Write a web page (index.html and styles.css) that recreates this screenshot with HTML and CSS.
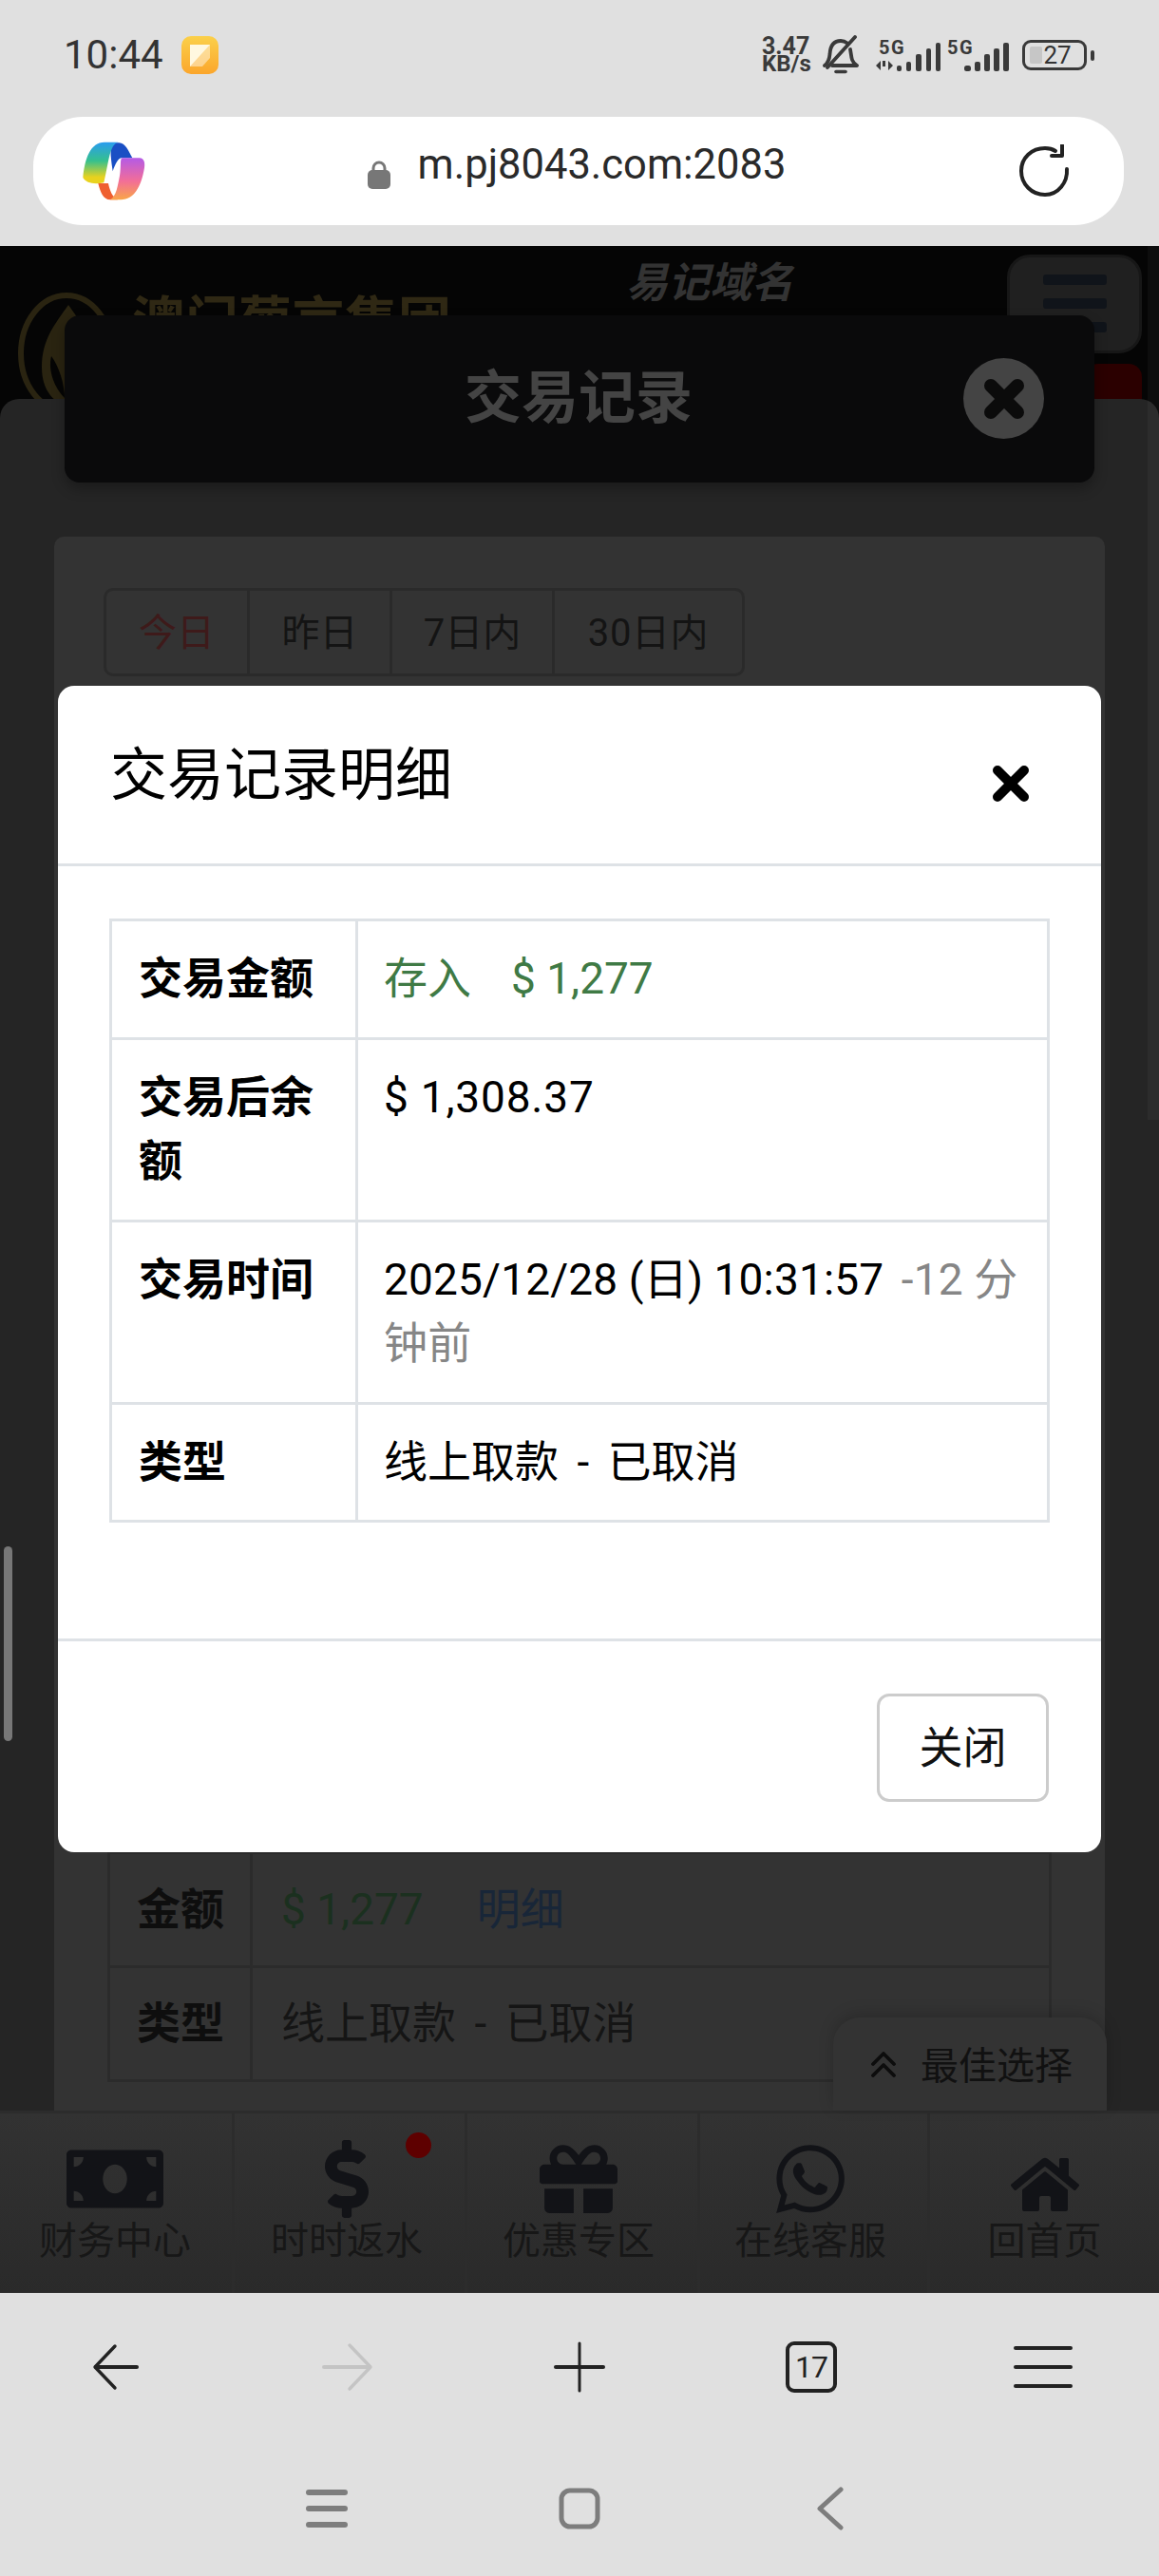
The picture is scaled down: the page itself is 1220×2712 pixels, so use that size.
FILE: index.html
```html
<!DOCTYPE html>
<html lang="zh-CN">
<head>
<meta charset="utf-8">
<title>交易记录明细</title>
<link rel="stylesheet" href="styles.css">
</head>
<body>
<div class="screen">
  <header class="status">
    <div class="status-left">
      <span class="clock">10:44</span>
      <svg class="note" width="39" height="40" viewBox="0 0 39 40"><defs><linearGradient id="ng" x1="0" y1="0" x2="0" y2="1"><stop offset="0" stop-color="#fbd04a"/><stop offset="1" stop-color="#fba62c"/></linearGradient></defs><rect width="39" height="40" rx="10" fill="url(#ng)"/><path d="M9 9h21v14l-8 9H9z" fill="#fff" opacity=".45"/><path d="M9 9h21L9 32z" fill="#fff8e0"/></svg>
    </div>
    <div class="status-right">
      <div class="speed"><span class="speed-num">3.47</span><span class="speed-unit">KB/s</span></div>
      <svg class="bell" width="38" height="42" viewBox="0 0 38 42" fill="none" stroke="#3a3a3a" stroke-width="3.800" stroke-linecap="round" stroke-linejoin="round"><path d="M2 32c4-3 5-6 5.500-12C8 11 12 6 19 6c3 0 5 1 7 2.500M29 15c.5 2 1 8 2 11 .6 2 3 4.500 5 6H10"/><path d="M5 34L34 2"/><path d="M14 38.500h10" stroke-width="3.600"/></svg>
      <svg class="signal" width="142" height="44" viewBox="0 -8 142 44"><text x="4" y="17" class="sig-text">5G</text><g fill="#3a3a3a"><path d="M6 24l-5 5 5 5zM8 24h3v6h-3zM14 34l5-5-5-5zM13 24h-1z"/><rect x="23" y="29" width="5" height="6" rx="2"/><rect x="33" y="25" width="5" height="10" rx="2"/><rect x="43" y="17" width="6" height="18" rx="2"/><rect x="54" y="11" width="5" height="24" rx="2"/><rect x="64" y="5" width="5" height="30" rx="2"/></g><text x="76" y="17" class="sig-text">5G</text><g fill="#3a3a3a"><rect x="94" y="29" width="7" height="6" rx="2.500"/><rect x="105" y="25" width="6" height="10" rx="2"/><rect x="115" y="17" width="6" height="18" rx="2"/><rect x="125" y="11" width="6" height="24" rx="2"/><rect x="135" y="5" width="6" height="30" rx="2"/></g></svg>
      <div class="battery"><span class="battery-body"><span class="battery-fill"></span><span class="battery-num">27</span></span><span class="battery-nub"></span></div>
    </div>
  </header>

  <div class="address">
    <svg class="copilot" width="68" height="62" viewBox="80 56 200 186">
      <defs>
        <linearGradient id="cl" x1="0" y1="0" x2="0" y2="1"><stop offset="0" stop-color="#2a9cf0"/><stop offset=".45" stop-color="#35c08e"/><stop offset=".85" stop-color="#e9d21e"/></linearGradient>
        <linearGradient id="cr" x1="0" y1="0" x2="0" y2="1"><stop offset="0" stop-color="#b45ae6"/><stop offset=".55" stop-color="#f26e98"/><stop offset="1" stop-color="#f9a648"/></linearGradient>
      </defs>
      <path d="M176 60h20c20 0 30 26 42 48h-34c-10 0-20 18-28 42-4-30-12-70 0-90z" fill="#1a4fc4"/>
      <path d="M82 170C88 110 105 58 150 58h44c-28 6-30 60-46 128-30 6-56 2-66-16z" fill="url(#cl)"/>
      <path d="M130 188h32c5 24 12 42 30 52h-24c-22 0-32-26-38-52z" fill="#ef5f30"/>
      <path d="M206 108h54c16 0 20 16 14 42-10 48-30 90-72 90h-34c20-12 24-46 30-76 5-26 0-56 8-56z" fill="url(#cr)"/>
    </svg>
    <div class="url">
      <svg width="24" height="30" viewBox="0 0 24 30"><path d="M6 12V8a6 6 0 0 1 12 0v4" fill="none" stroke="#777" stroke-width="3"/><rect y="10" width="24" height="20" rx="5" fill="#777"/></svg>
      <span class="url-text">m.pj8043.com:2083</span>
    </div>
    <svg class="reload" width="56" height="56" viewBox="0 0 56 56" fill="none" stroke="#222" stroke-width="4" stroke-linecap="round" stroke-linejoin="round"><path d="M51 26c1 14-9 27-23 27S3 42 3 28 14 4 28 4c4 0 8 1 11 3"/><path d="M43 1v11H32" transform="translate(3 0)"/></svg>
  </div>

  <main class="page">
    <div class="site-head">
      <div class="brand">
        <svg class="brand-logo" width="104" height="130" viewBox="0 0 104 130"><ellipse cx="52" cy="65" rx="48" ry="61" fill="none" stroke="#2a2411" stroke-width="6"/><path d="M54 14c14 20 30 40 30 66 0 26-16 38-30 41-14-3-28-16-28-41C26 50 40 34 54 14z" fill="#2a2411"/><path d="M36 68c8 10 14 30 14 44-10-10-18-28-14-44z" fill="#050505"/></svg>
        <span class="brand-name">澳门葡京集团</span>
      </div>
      <span class="domain">易记域名</span>
      <div class="head-right">
        <div class="menu-btn"><i></i><i></i><i></i></div>
        <div class="red-btn"></div>
      </div>
    </div>

    <section class="panel">
      <div class="card">
        <div class="tabs">
          <span class="tab tab-active">今日</span>
          <span class="tab">昨日</span>
          <span class="tab">7日内</span>
          <span class="tab">30日内</span>
        </div>
        <table class="rec">
          <tr><th>金额</th><td><span class="rec-money">$ 1,277</span><span class="rec-link">明细</span></td></tr>
          <tr><th>类型</th><td class="spaced">线上取款 - 已取消</td></tr>
        </table>
      </div>
    </section>

    <nav class="nav">
      <a class="nav-item">
        <span class="nav-icon"><svg width="102" height="82" viewBox="0 0 640 512"><path d="M608 64H32C14.33 64 0 78.33 0 96v320c0 17.67 14.33 32 32 32h576c17.67 0 32-14.33 32-32V96c0-17.67-14.33-32-32-32zM48 400v-64c35.35 0 64 28.65 64 64H48zm0-224v-64h64c0 35.35-28.65 64-64 64zm272 176c-44.19 0-80-42.99-80-96 0-53.02 35.82-96 80-96s80 42.98 80 96c0 53.03-35.83 96-80 96zm272 48h-64c0-35.35 28.65-64 64-64v64zm0-224c-35.35 0-64-28.65-64-64h64v64z"/></svg></span>
        <span>财务中心</span>
      </a>
      <a class="nav-item">
        <span class="nav-icon"><svg width="46" height="82" viewBox="0 0 288 512"><path d="M209.2 233.4l-108-31.6C88.7 198.2 80 186.5 80 173.5c0-16.3 13.2-29.5 29.5-29.5h66.3c12.2 0 24.2 3.700 34.2 10.500 6.100 4.100 14.300 3.100 19.500-2l34.800-34c7.100-6.900 6.100-18.400-1.800-24.500C238 74.800 207.400 64.100 176 64V16c0-8.800-7.200-16-16-16h-32c-8.800 0-16 7.200-16 16v48h-2.500C45.800 64-5.400 118.700.5 183.600c4.200 46.100 39.400 83.600 83.800 96.600l102.500 30c12.500 3.700 21.200 15.300 21.200 28.300 0 16.300-13.200 29.500-29.500 29.500h-66.300C100 368 88 364.300 78 357.500c-6.100-4.100-14.300-3.100-19.500 2l-34.800 34c-7.100 6.900-6.100 18.400 1.800 24.500 24.500 19.200 55.100 29.900 86.500 30v48c0 8.800 7.200 16 16 16h32c8.800 0 16-7.200 16-16v-48.200c46.600-.9 90.300-28.600 105.700-72.700 21.500-61.600-14.600-124.800-72.500-141.700z"/></svg></span>
        <span>时时返水</span>
        <span class="nav-dot"></span>
      </a>
      <a class="nav-item">
        <span class="nav-icon"><svg width="82" height="82" viewBox="0 0 512 512"><path d="M32 448c0 17.700 14.300 32 32 32h160V320H32v128zm256 32h160c17.700 0 32-14.300 32-32V320H288v160zm192-320h-42.100c6.200-12.100 10.100-25.500 10.100-40 0-48.500-39.500-88-88-88-41.600 0-68.500 21.300-103 68.300-34.500-47-61.400-68.300-103-68.300-48.500 0-88 39.500-88 88 0 14.500 3.800 27.900 10.100 40H32c-17.700 0-32 14.300-32 32v80c0 8.800 7.200 16 16 16h480c8.800 0 16-7.200 16-16v-80c0-17.700-14.300-32-32-32zm-326.100 0c-22.100 0-40-17.900-40-40s17.900-40 40-40c19.900 0 34.600 3.300 86.100 80h-86.100zm206.100 0h-86.100c51.400-76.500 65.700-80 86.100-80 22.100 0 40 17.900 40 40s-17.900 40-40 40z"/></svg></span>
        <span>优惠专区</span>
      </a>
      <a class="nav-item">
        <span class="nav-icon"><svg width="72" height="82" viewBox="0 0 448 512"><path d="M380.900 97.100C339 55.100 283.200 32 223.900 32c-122.400 0-222 99.600-222 222 0 39.100 10.200 77.300 29.600 111L0 480l117.700-30.900c32.400 17.700 68.900 27 106.100 27h.1c122.300 0 224.100-99.600 224.100-222 0-59.300-25.200-115-67.100-157zm-157 341.600c-33.200 0-65.700-8.900-94-25.700l-6.700-4-69.800 18.300L72 359.200l-4.400-7c-18.500-29.400-28.200-63.300-28.200-98.200 0-101.700 82.800-184.500 184.600-184.500 49.300 0 95.600 19.200 130.400 54.100 34.800 34.900 56.200 81.200 56.100 130.500 0 101.800-84.900 184.600-186.600 184.600zm101.200-138.200c-5.500-2.800-32.800-16.200-37.900-18-5.100-1.900-8.800-2.800-12.500 2.800-3.700 5.600-14.300 18-17.600 21.800-3.200 3.700-6.500 4.200-12 1.400-32.600-16.300-54-29.100-75.500-66-5.700-9.800 5.700-9.100 16.300-30.300 1.800-3.700.9-6.900-.5-9.700-1.400-2.800-12.500-30.100-17.100-41.200-4.500-10.800-9.100-9.300-12.500-9.500-3.200-.2-6.900-.2-10.600-.2-3.700 0-9.700 1.400-14.800 6.900-5.100 5.600-19.400 19-19.400 46.300 0 27.300 19.900 53.700 22.600 57.400 2.800 3.700 39.100 59.700 94.800 83.800 35.200 15.200 49 16.500 66.600 13.900 10.700-1.600 32.800-13.400 37.400-26.400 4.600-13 4.600-24.100 3.200-26.400-1.300-2.500-5-3.900-10.500-6.600z"/></svg></span>
        <span>在线客服</span>
      </a>
      <a class="nav-item">
        <span class="nav-icon"><svg class="icon-home" width="72" height="64" viewBox="0 0 576 512"><path d="M280.370 148.260L96 300.110V464a16 16 0 0 0 16 16l112.060-.29a16 16 0 0 0 15.920-16V368a16 16 0 0 1 16-16h64a16 16 0 0 1 16 16v95.640a16 16 0 0 0 16 16.050L464 480a16 16 0 0 0 16-16V300L295.670 148.260a12.190 12.190 0 0 0-15.300 0zM571.600 251.470L488 182.560V44.050a12 12 0 0 0-12-12h-56a12 12 0 0 0-12 12v72.610L318.470 43a48 48 0 0 0-61 0L4.340 251.470a12 12 0 0 0-1.600 16.900l25.500 31A12 12 0 0 0 45.150 301l235.220-193.740a12.190 12.190 0 0 1 15.300 0L530.900 301a12 12 0 0 0 16.900-1.600l25.500-31a12 12 0 0 0-1.700-16.930z"/></svg></span>
        <span>回首页</span>
      </a>
    </nav>

    <div class="best">
      <svg width="32" height="27" viewBox="0 0 32 27" fill="none" stroke="#0d0d0d" stroke-width="3.800" stroke-linecap="round" stroke-linejoin="round"><path d="M5 13L16 2l11 11M5 25l11-11 11 11"/></svg>
      <span>最佳选择</span>
    </div>

    <div class="page-title">
      <h1 class="page-title-text">交易记录</h1>
      <span class="title-close"><svg width="46" height="46" viewBox="0 0 46 46"><path d="M9 9L37 37M37 9L9 37" stroke="#0b0b0b" stroke-width="14" stroke-linecap="round"/></svg></span>
    </div>

    <div class="scroll-left"></div>
    <div class="scroll-right"></div>

    <div class="modal">
      <div class="modal-head">
        <h2 class="modal-title">交易记录明细</h2>
        <svg class="modal-x" width="40" height="40" viewBox="0 0 40 40"><path d="M6 6L34 34M34 6L6 34" stroke="#000" stroke-width="10" stroke-linecap="round"/></svg>
      </div>
      <div class="modal-body">
        <table class="detail">
          <tr><th>交易金额</th><td class="money"><span class="money-kind">存入</span>$ 1,277</td></tr>
          <tr><th>交易后余额</th><td class="wide">$ 1,308.37</td></tr>
          <tr><th>交易时间</th><td class="time">2025/12/28 (日) 10:31:57 <span class="muted ago">-12 分</span><span class="muted">钟前</span></td></tr>
          <tr><th>类型</th><td class="spaced">线上取款 - 已取消</td></tr>
        </table>
      </div>
      <div class="modal-foot">
        <button class="close-btn" type="button">关闭</button>
      </div>
    </div>
  </main>

  <footer class="system">
    <div class="toolbar">
      <svg width="50" height="50" viewBox="0 0 50 50" fill="none" stroke="#222" stroke-linecap="round" stroke-linejoin="round"><path d="M24 3L3 25l21 22" stroke-width="3.400"/><path d="M4 25h43" stroke-width="4"/></svg>
      <svg width="56" height="52" viewBox="0 0 56 52" fill="none" stroke="#c4c4c4" stroke-linecap="round" stroke-linejoin="round"><path d="M30 3l22 23-22 23" stroke-width="3.400"/><path d="M3 26h48" stroke-width="4"/></svg>
      <svg width="54" height="54" viewBox="0 0 54 54" fill="none" stroke="#222" stroke-linecap="round"><path d="M27 2v50" stroke-width="3"/><path d="M2 27h50" stroke-width="4"/></svg>
      <span class="tab-count">17</span>
      <svg width="62" height="46" viewBox="0 0 62 46" fill="none" stroke="#222" stroke-width="4" stroke-linecap="round"><path d="M2 3h58M2 23h58M2 43h58"/></svg>
    </div>
    <div class="sysbar">
      <svg width="44" height="44" viewBox="0 0 44 44" fill="none" stroke="#7d7d7d" stroke-width="6" stroke-linecap="round"><path d="M3 5h38M3 22h38M3 39h38"/></svg>
      <svg width="44" height="44" viewBox="0 0 44 44" fill="none" stroke="#7d7d7d" stroke-width="5"><rect x="3" y="3" width="38" height="38" rx="9"/></svg>
      <svg class="sys-back" width="30" height="46" viewBox="0 0 30 46" fill="none" stroke="#7d7d7d" stroke-width="5" stroke-linecap="round" stroke-linejoin="round"><path d="M26 3L4 23l22 20"/></svg>
    </div>
  </footer>
</div>
</body>
</html>
```

FILE: styles.css
```css
* { box-sizing: border-box; }
html, body { margin: 0; padding: 0; }
body {
  width: 1220px;
  height: 2712px;
  overflow: hidden;
  font-family: Roboto, "Noto Sans CJK SC", sans-serif;
  color: #000;
  background: #e0e0e0;
}
.screen { display: flex; flex-direction: column; width: 1220px; height: 2712px; }

/* status bar */
.status {
  height: 123px;
  padding: 36px 68px 0 67px;
  display: flex;
  justify-content: space-between;
  align-items: flex-start;
}
.status-left { display: flex; align-items: center; gap: 19px; height: 44px; }
.clock { font-size: 42px; color: #333; line-height: 44px; }
.status-right { display: flex; align-items: center; height: 44px; }
.speed { display: flex; flex-direction: column; width: 64px; color: #3a3a3a; font-weight: 700; }
.speed-num { font-size: 25px; line-height: 18px; }
.speed-unit { font-size: 24px; line-height: 18px; }
.bell { margin-right: 17px; }
.signal { margin-right: 13px; margin-top: -8px; }
.sig-text { font: 700 20px Roboto, sans-serif; letter-spacing: 1.500px; fill: #3a3a3a; }
.battery { display: flex; align-items: center; gap: 4px; }
.battery-body {
  position: relative;
  width: 68px;
  height: 32px;
  border: 3px solid #3a3a3a;
  border-radius: 9px;
  display: flex;
  align-items: center;
  justify-content: center;
}
.battery-fill { position: absolute; left: 5px; top: 4px; bottom: 4px; width: 13px; background: #c6c6c6; border-radius: 2px; }
.battery-num { position: relative; font-size: 26px; color: #333; line-height: 1; padding-left: 6px; }
.battery-nub { width: 4px; height: 11px; background: #3a3a3a; border-radius: 2px; }

/* address bar */
.address {
  height: 114px;
  margin: 0 37px 0 35px;
  padding: 0 55px 0 51px;
  background: #fff;
  border-radius: 52px;
  display: flex;
  align-items: center;
  justify-content: space-between;
}
.url { display: flex; align-items: center; gap: 29px; margin-left: -12px; }
.url svg { margin-top: 8px; }
.url-text { font-size: 43.500px; color: #2a2a2a; line-height: 50px; margin-top: -12px; }
.copilot { display: block; }

/* underlying page */
.page {
  position: relative;
  margin-top: 22px;
  flex: 1;
  background: #050505;
  overflow: hidden;
  display: flex;
  flex-direction: column;
}
.site-head { height: 161px; display: flex; align-items: flex-start; padding-left: 18px; }
.brand { display: flex; align-items: flex-start; gap: 17px; margin-top: 48px; }
.brand-logo { flex: none; }
.brand-name { font-size: 56px; font-weight: 700; color: #2f2814; line-height: 1; margin-top: 4px; }
.domain {
  margin-left: 184px;
  margin-top: 13px;
  font-size: 44px;
  line-height: 1.2;
  font-weight: 700;
  font-style: italic;
  color: #333;
}
.head-right { margin-left: auto; margin-right: 18px; margin-top: 9px; display: flex; flex-direction: column; align-items: flex-end; gap: 11px; }
.menu-btn {
  width: 142px;
  height: 104px;
  padding: 18px 0 0;
  background: #202020;
  border: 3px solid #171717;
  border-radius: 24px;
  display: flex;
  flex-direction: column;
  align-items: center;
  gap: 14px;
}
.menu-btn i { display: block; width: 67px; height: 11px; border-radius: 3px; background: #10141a; }
.red-btn { width: 60px; height: 40px; background: #2b0000; border-radius: 14px 14px 0 0; }

.panel {
  flex: 1;
  min-height: 0;
  padding: 145px 57px 0;
  background: #252525;
  border-radius: 20px 20px 0 0;
  display: flex;
}
.card {
  flex: 1;
  padding: 54px 56px 30px 52px;
  background: #333;
  border-radius: 10px 10px 0 0;
  display: flex;
  flex-direction: column;
}
.tabs {
  align-self: flex-start;
  display: flex;
  width: 675px;
  height: 93px;
  border: 3px solid #2a2a2a;
  border-radius: 10px;
  font-size: 40px;
  color: #141414;
}
.tab { display: flex; align-items: center; justify-content: center; padding-bottom: 5px; border-left: 3px solid #2a2a2a; white-space: nowrap; }
.tab:nth-child(1) { width: 148px; border-left: 0; }
.tab:nth-child(2) { width: 150px; }
.tab:nth-child(3) { width: 171px; }
.tab:nth-child(4) { flex: 1; letter-spacing: .6px; }
.tab-active { color: #3e1a1a; }

.rec {
  margin-top: auto;
  margin-left: 4px;
  width: 994px;
  table-layout: fixed;
  border-collapse: collapse;
  font-size: 46px;
  color: #151515;
}
.rec th, .rec td { height: 120px; border: 3px solid #2b2b2b; padding: 0 30px; vertical-align: middle; text-align: left; line-height: 1.5; }
.rec th { width: 150px; padding-left: 28px; padding-right: 0; font-weight: 700; color: #0e0e0e; white-space: nowrap; }
.rec-money { color: #1b301f; margin-right: 56px; }
.rec-link { color: #182638; }
.spaced { word-spacing: 8px; }

.nav {
  height: 192px;
  flex: none;
  display: grid;
  grid-template-columns: 247px 245px 245px 242px 241px;
  background: linear-gradient(#323232, #2a2a2a);
  border-top: 3px solid #2c2c2c;
}
.nav-item {
  position: relative;
  padding-top: 28px;
  display: flex;
  flex-direction: column;
  align-items: center;
  font-size: 40px;
  line-height: 50px;
  color: #171717;
  border-right: 3px solid #2c2c2c;
}
.nav-item:nth-child(1) { padding-right: 2px; }
.nav-item:nth-child(2) { padding-right: 6px; }
.nav-item:nth-child(3) { padding-right: 8px; }
.nav-item:nth-child(4) { padding-right: 7px; }
.nav-item:last-child { border-right: 0; }
.nav-icon { display: flex; align-items: flex-start; justify-content: center; height: 82px; fill: #121317; }
.icon-home { margin-top: 15px; }
.nav-dot { position: absolute; left: 180px; top: 20px; width: 27px; height: 27px; border-radius: 50%; background: #5e0000; }

.best {
  position: absolute;
  right: 55px;
  bottom: 192px;
  width: 288px;
  height: 98px;
  padding-left: 37px;
  background: #333;
  border-radius: 28px 28px 0 0;
  box-shadow: 0 -4px 16px rgba(0,0,0,.18);
  display: flex;
  align-items: center;
  gap: 23px;
  font-size: 40px;
  color: #111;
}
.best span { margin-top: -2px; }

.page-title {
  position: absolute;
  left: 68px;
  top: 73px;
  width: 1084px;
  height: 176px;
  background: #0a0a0b;
  border-radius: 16px;
  box-shadow: 0 6px 14px rgba(0,0,0,.3);
  display: flex;
  align-items: center;
  justify-content: center;
}
.page-title-text { margin: 0 2px 0 0; font-size: 60px; font-weight: 700; color: #444; line-height: 1; }
.title-close {
  position: absolute;
  left: 946px;
  top: 45px;
  width: 85px;
  height: 85px;
  border-radius: 50%;
  background: #444;
  display: flex;
  align-items: center;
  justify-content: center;
}

.scroll-left { position: absolute; left: 4px; top: 1369px; width: 9px; height: 205px; border-radius: 5px; background: #777; }
.scroll-right { position: absolute; right: 0; top: 0; width: 12px; height: 920px; background: rgba(255,255,255,.035); }

.modal {
  position: absolute;
  left: 61px;
  top: 463px;
  width: 1098px;
  height: 1228px;
  background: #fff;
  border-radius: 17px;
  display: flex;
  flex-direction: column;
}
.modal-head {
  height: 190px;
  flex: none;
  padding: 0 75px 0 55px;
  border-bottom: 3px solid #dee2e6;
  display: flex;
  align-items: center;
  justify-content: space-between;
}
.modal-title { margin: 2px 0 0; font-size: 60px; font-weight: 400; line-height: 1.5; }
.modal-x { margin-top: 18px; }
.modal-body { flex: 1; padding: 55px 54px 0; }
.detail {
  width: 990px;
  table-layout: fixed;
  border-collapse: collapse;
  font-size: 46px;
  line-height: 67.500px;
}
.detail th, .detail td {
  border: 3px solid #dee2e6;
  padding: 27px 27px;
  text-align: left;
  vertical-align: top;
}
.detail th { width: 259px; padding-left: 28px; padding-right: 28px; font-weight: 700; }
.money { color: #3f7a45; }
.money-kind { margin-right: 42px; }
.wide { letter-spacing: .8px; }
.time { letter-spacing: .15px; }
.muted { color: #868686; }
.ago { margin-left: 7px; }
.modal-foot {
  height: 225px;
  flex: none;
  padding: 55px 55px 0 0;
  border-top: 3px solid #dee2e6;
  display: flex;
  justify-content: flex-end;
  align-items: flex-start;
}
.close-btn {
  width: 181px;
  height: 114px;
  padding: 0 0 8px;
  font: inherit;
  font-size: 46px;
  color: #111;
  background: #fff;
  border: 3px solid #ccc;
  border-radius: 13px;
}

/* browser bars */
.system { height: 298px; flex: none; background: #e0e0e0; }
.toolbar {
  height: 156px;
  display: grid;
  grid-template-columns: repeat(5, 244px);
  align-items: center;
  justify-items: center;
}
.tab-count {
  width: 54px;
  height: 54px;
  border: 4px solid #222;
  border-radius: 9px;
  font-size: 32px;
  line-height: 46px;
  text-align: center;
  color: #222;
  letter-spacing: -1px;
}
.sysbar {
  margin: 0 auto;
  width: 798px;
  height: 142px;
  display: grid;
  grid-template-columns: repeat(3, 266px);
  align-items: center;
  justify-items: center;
}
.sys-back { margin-right: 4px; }
```
